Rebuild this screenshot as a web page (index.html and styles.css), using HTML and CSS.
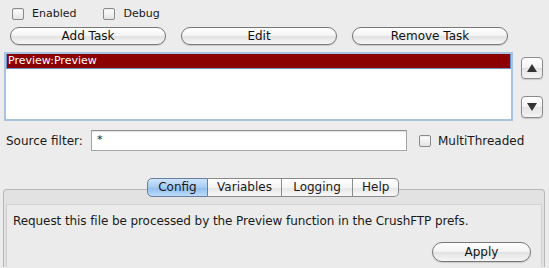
FILE: index.html
```html
<!DOCTYPE html>
<html lang="en">
<head>
    <meta charset="UTF-8">
    <meta name="viewport" content="width=device-width, initial-scale=1.0">
    <title>Preview Task</title>
    <link rel="stylesheet" href="styles.css">
</head>
<body>
    <div class="window">
        <div class="check-row">
            <label class="check"><span class="box"></span>Enabled</label>
            <label class="check check-debug"><span class="box"></span>Debug</label>
        </div>

        <div class="button-row">
            <button class="pill">Add Task</button>
            <button class="pill">Edit</button>
            <button class="pill">Remove Task</button>
        </div>

        <div class="list-row">
            <div class="task-list">
                <div class="task selected">Preview:Preview</div>
            </div>
            <div class="move-buttons">
                <button class="square">
                    <svg width="10" height="8" viewBox="0 0 10 8"><polygon points="5,0 10,8 0,8" fill="#333"/></svg>
                </button>
                <button class="square">
                    <svg width="10" height="8" viewBox="0 0 10 8"><polygon points="0,0 10,0 5,8" fill="#333"/></svg>
                </button>
            </div>
        </div>

        <div class="filter-row">
            <span class="filter-label">Source filter:</span>
            <div class="text-field">*</div>
            <label class="check"><span class="box"></span>MultiThreaded</label>
        </div>

        <div class="tabs">
            <span class="tab active">Config</span>
            <span class="tab">Variables</span>
            <span class="tab">Logging</span>
            <span class="tab last">Help</span>
        </div>
        <div class="panel">
            <div class="panel-body">
                <p class="description">Request this file be processed by the Preview function in the CrushFTP prefs.</p>
                <div class="apply-row">
                    <button class="pill apply">Apply</button>
                </div>
            </div>
        </div>
    </div>
</body>
</html>
```

FILE: styles.css
```css
/* General Styling */
body {
    margin: 0;
    background: #ececec;
    font-family: 'DejaVu Sans', 'Liberation Sans', sans-serif;
    font-size: 12px;
    color: #1a1a1a;
    overflow: hidden;
}

.window {
    width: 549px;
    height: 268px;
    overflow: hidden;
}

/* Checkboxes */
.check-row {
    display: flex;
    height: 12px;
    margin-top: 8px;
    padding-left: 12px;
}

.check {
    display: flex;
    align-items: center;
    font-size: 11px;
    line-height: 12px;
}

.check-debug {
    margin-left: 27px;
}

.box {
    width: 10px;
    height: 10px;
    border: 1px solid #8a8a8a;
    border-radius: 2px;
    background: linear-gradient(#ffffff, #e4e4e4);
    margin-right: 8px;
    box-shadow: inset 0 1px 1px rgba(0, 0, 0, 0.08);
}

/* Buttons */
.button-row {
    display: flex;
    gap: 15px;
    margin-top: 7px;
    padding-left: 10px;
}

.pill {
    width: 156px;
    height: 18px;
    padding: 0;
    border: 1px solid #777;
    border-radius: 9px;
    background: linear-gradient(#ffffff 0%, #f3f3f3 50%, #e2e2e2 51%, #f6f6f6 100%);
    font-family: inherit;
    font-size: 12px;
    color: #111;
    box-shadow: 0 1px 1px rgba(0, 0, 0, 0.15);
}

/* Task list */
.list-row {
    display: flex;
    margin-top: 7px;
    padding-left: 4px;
}

.task-list {
    width: 505px;
    height: 65px;
    border: 2px solid #a8c2e0;
    background: #fff;
}

.task {
    height: 14px;
    line-height: 14px;
    font-size: 11px;
    padding-left: 1px;
}

.task.selected {
    background: #8b0000;
    color: #fff;
    border: 1px solid #6d8fc4;
    border-top: none;
}

.move-buttons {
    display: flex;
    flex-direction: column;
    gap: 17px;
    margin-left: 8px;
    margin-top: 5px;
}

.square {
    width: 22px;
    height: 22px;
    padding: 0;
    border: 1px solid #8c8c8c;
    border-radius: 4px;
    background: linear-gradient(#ffffff 0%, #f2f2f2 50%, #e3e3e3 51%, #f4f4f4 100%);
    display: flex;
    align-items: center;
    justify-content: center;
    box-shadow: 0 1px 1px rgba(0, 0, 0, 0.15);
}

/* Source filter */
.filter-row {
    display: flex;
    align-items: center;
    margin-top: 9px;
    padding-left: 6px;
    height: 21px;
}

.filter-label {
    width: 85px;
}

.text-field {
    width: 309px;
    height: 19px;
    border: 1px solid #a5a5a5;
    border-top-color: #8e8e8e;
    background: #fff;
    padding-left: 5px;
    font-size: 11px;
    line-height: 17px;
    margin-right: 12px;
    box-shadow: inset 0 1px 1px rgba(0, 0, 0, 0.12);
}

.filter-row .check {
    font-size: 12px;
}

.filter-row .box {
    margin-right: 7px;
}

/* Tabs */
.tabs {
    display: flex;
    margin-top: 27px;
    margin-left: 147px;
    margin-bottom: -8px;
    position: relative;
    z-index: 1;
}

.tab {
    height: 17px;
    line-height: 17px;
    border: 1px solid #8a8a8a;
    border-left: none;
    background: linear-gradient(#ffffff 0%, #f4f4f4 50%, #e6e6e6 51%, #f7f7f7 100%);
    text-align: center;
    padding: 0 9px;
}

.tab.active {
    border-left: 1px solid #6a7fa0;
    border-color: #6a7fa0;
    border-radius: 5px 0 0 5px;
    background: linear-gradient(#cfe4fb 0%, #a6cbf3 50%, #8dbcef 51%, #bcdcfa 100%);
    width: 41px;
}

.tab:nth-child(2) {
    width: 55px;
}

.tab:nth-child(3) {
    width: 52px;
}

.tab.last {
    border-radius: 0 5px 5px 0;
    width: 27px;
}

/* Panel */
.panel {
    margin-left: 3px;
    width: 536px;
    height: 63px;
    border: 1px solid #b8b8b8;
    border-bottom: none;
    border-radius: 4px 4px 0 0;
    background: #e2e2e2;
    padding: 14px 2px 0 2px;
}

.panel-body {
    border-top: 1px solid #d2d2d2;
    border-left: 1px solid #d2d2d2;
    border-right: 1px solid #d2d2d2;
    background: #ebebeb;
    height: 62px;
    padding-left: 6px;
}

.description {
    margin: 9px 0 0 0;
    line-height: 14px;
    letter-spacing: -0.08px;
}

.apply-row {
    display: flex;
    justify-content: flex-end;
    margin-top: 14px;
    padding-right: 10px;
}

.apply {
    width: 99px;
    height: 20px;
    border-radius: 10px;
}
```
